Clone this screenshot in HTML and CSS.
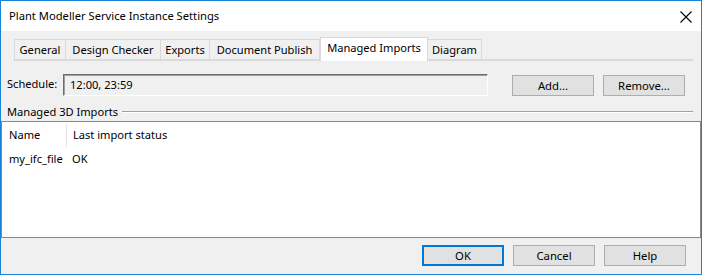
FILE: index.html
```html
<!DOCTYPE html>
<html>
<head>
<title>Plant Modeller Service Instance Settings</title>
<link rel="stylesheet" href="styles.css">
</head>
<body>
<div class="window">
  <div class="titlebar">
    <span class="title">Plant Modeller Service Instance Settings</span>
    <svg class="close" width="12" height="12" viewBox="0 0 12 12"><path d="M0.5 0.5 L11.5 11.5 M11.5 0.5 L0.5 11.5" stroke="#000" stroke-width="1.1" fill="none"/></svg>
  </div>
  <div class="content">
    <div class="tabs">
      <span class="tab t-general">General</span>
      <span class="tab t-design">Design Checker</span>
      <span class="tab t-exports">Exports</span>
      <span class="tab t-publish">Document Publish</span>
      <span class="tab t-imports active">Managed Imports</span>
      <span class="tab t-diagram">Diagram</span>
    </div>
    <div class="schedule">
      <span class="label">Schedule:</span>
      <div class="field">12:00, 23:59</div>
      <button class="btn">Add...</button>
      <button class="btn">Remove...</button>
    </div>
    <div class="group">
      <span>Managed 3D Imports</span>
      <div class="rule"></div>
    </div>
    <div class="list">
      <div class="row head">
        <span class="col-name">Name</span>
        <span class="col-status">Last import status</span>
      </div>
      <div class="row">
        <span class="col-name">my_ifc_file</span>
        <span class="col-status">OK</span>
      </div>
    </div>
    <div class="footer">
      <button class="btn default">OK</button>
      <button class="btn">Cancel</button>
      <button class="btn">Help</button>
    </div>
  </div>
</div>
</body>
</html>
```
FILE: styles.css
```css
html, body {margin:0; padding:0;}
body {font-family:"Noto Sans", "Liberation Sans", sans-serif; font-size:11.1px; color:#000;}
.window {width:702px; height:275px; box-sizing:border-box; border:1px solid #1883d7; display:flex; flex-direction:column; background:#f0f0f0;}
.titlebar {height:30px; background:#fff; display:flex; align-items:center; justify-content:space-between; padding:0 9px 0 8px;}
.title {line-height:16px; font-size:11.2px;}
.close {margin-top:1px;}
.content {flex:1; display:flex; flex-direction:column;}
.tabs {display:flex; align-items:flex-end; margin:6px 8px 0 13px; height:24px; border-bottom:2px solid #dadada; box-sizing:border-box;}
.tab {height:20px; line-height:19px; text-align:center; border:1px solid #d9d9d9; border-bottom:none; border-left:none; box-sizing:border-box; background:#f0f0f0;}
.tab:first-child {border-left:1px solid #d9d9d9;}
.tab.active {height:24px; background:#fff; border:1px solid #d9d9d9; border-bottom:none; margin-bottom:-2px; line-height:20px;}
.t-general {width:52px;}
.t-design {width:95px;}
.t-exports {width:49px;}
.t-publish {width:110px;}
.t-imports {width:108px;}
.t-diagram {width:54px;}
.schedule {display:flex; align-items:center; margin:13px 0 0 6px; height:22px;}
.label {width:56px; margin-top:-3px;}
.field {width:425px; height:22px; box-sizing:border-box; border:1px solid; border-color:#6d6d6d #fff #fff #6d6d6d; box-shadow:inset 1px 1px 0 #a0a0a0; padding-left:6px; line-height:20px;}
.btn {font-family:inherit; font-size:11.3px; width:82px; height:21px; box-sizing:border-box; background:#e1e1e1; border:1px solid #adadad; padding:0; color:#000;}
.schedule .btn:first-of-type {margin-left:24px;}
.schedule .btn + .btn {margin-left:9px;}
.group {display:flex; align-items:center; margin:7px 8px 0 6px; height:16px;}
.rule {flex:1; border-top:1px solid #a0a0a0; border-bottom:1px solid #fff; margin-left:4px; margin-top:1px;}
.list {height:117px; background:#fff; border:1px solid #828790; margin-top:2px; box-sizing:border-box; padding-left:6px;}
.row {display:flex; height:22px; align-items:center;}
.row.head {height:25px;}
.col-name {width:57px; padding-left:1px;}
.head .col-name {border-right:1px solid #e5e5e5; height:23px; line-height:22px; margin-top:2px;}
.col-status {padding-left:6px;}
.footer {flex:1; display:flex; justify-content:flex-end; align-items:flex-start; padding:7px 15px 0 0;}
.footer .btn + .btn {margin-left:9px;}
.btn.default {border:2px solid #0078d7;}
```
